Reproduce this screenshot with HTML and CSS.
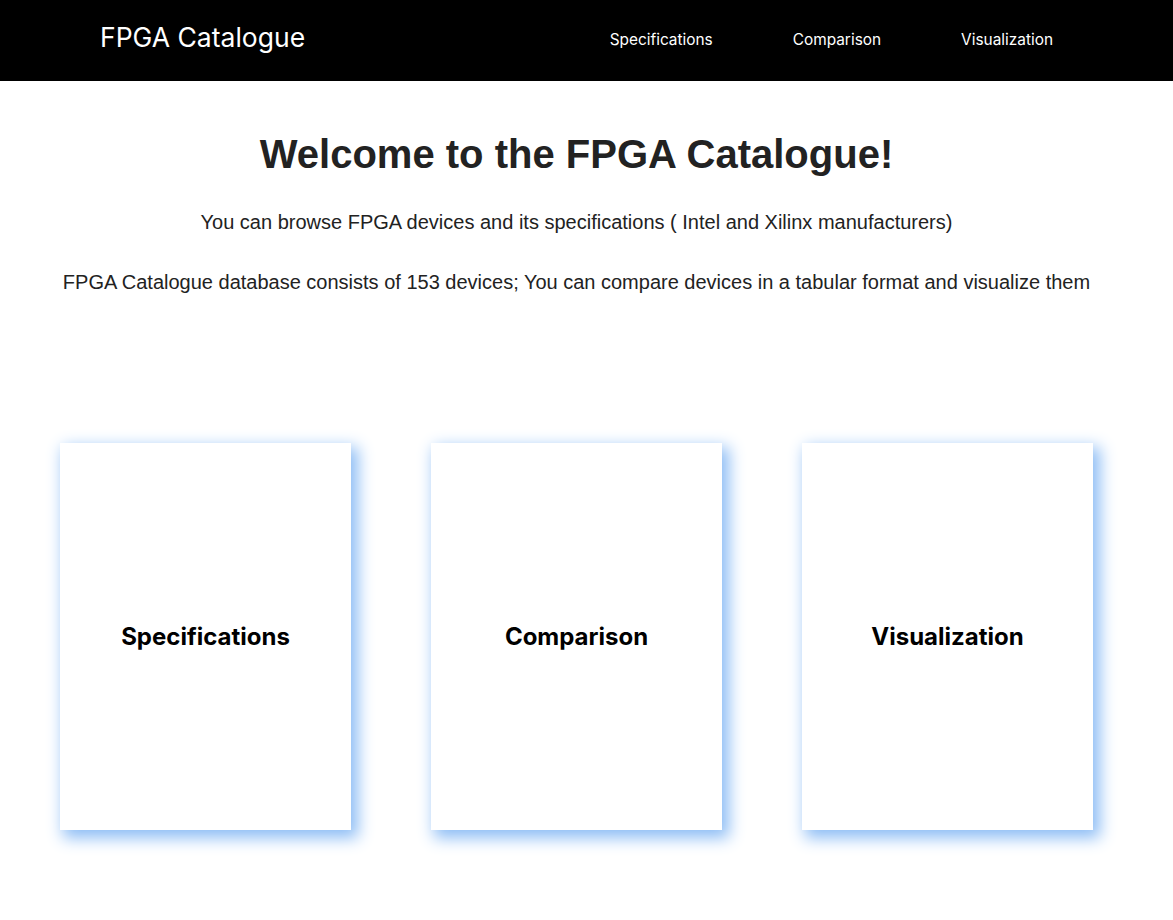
FILE: index.html
```html
<!DOCTYPE html>
<html lang="en">
<head>
  <meta charset="UTF-8">
  <meta name="viewport" content="width=device-width, initial-scale=1.0">
  <title>FPGA Catalogue</title>
  <link rel="stylesheet" href="styles.css">
</head>
<body>
  <nav class="navbar">
    <a class="brand" href="#">FPGA Catalogue</a>
    <ul class="nav-links">
      <li><a href="#">Specifications</a></li>
      <li><a href="#">Comparison</a></li>
      <li><a href="#">Visualization</a></li>
    </ul>
  </nav>

  <section class="intro">
    <h1>Welcome to the FPGA Catalogue!</h1>
    <p>You can browse FPGA devices and its specifications ( Intel and Xilinx manufacturers)</p>
    <p>FPGA Catalogue database consists of 153 devices; You can compare devices in a tabular format and visualize them</p>
  </section>

  <section class="cards">
    <a class="card" href="#">Specifications</a>
    <a class="card" href="#">Comparison</a>
    <a class="card" href="#">Visualization</a>
  </section>
</body>
</html>
```

FILE: styles.css
```css
body {
  margin: 0;
  padding: 0;
  min-height: 920px;
  font-family: "Liberation Sans", Arial, sans-serif;
  color: #222;
  background: #fff;
}
a {
  text-decoration: none;
}
.navbar {
  display: flex;
  align-items: center;
  justify-content: space-between;
  height: 81px;
  padding: 0 120px 0 100px;
  background-color: #000;
  font-family: Inter, "Noto Sans", sans-serif;
}
.brand {
  color: #fff;
  font-size: 26.5px;
  margin-top: -8px;
}
.nav-links {
  display: flex;
  gap: 80px;
  list-style: none;
  margin: 0;
  padding: 0 0 4px 0;
}
.nav-links a {
  color: #fff;
  font-size: 15.4px;
}
.intro {
  text-align: center;
  padding: 51px 20px 0 0;
}
.intro h1 {
  font-size: 40px;
  font-weight: bold;
  margin: 0 0 34px 0;
}
.intro p {
  font-size: 20px;
  margin: 0 0 37px 0;
}
.cards {
  display: flex;
  gap: 80px;
  padding: 112px 80px 60px 60px;
}
.card {
  width: 291px;
  height: 387px;
  display: flex;
  align-items: center;
  justify-content: center;
  background: #fff;
  color: #000;
  font-family: Inter, "Noto Sans", sans-serif;
  font-size: 24px;
  font-weight: bold;
  box-shadow: 5px 6px 15px 2px #8dbdf5;
}
```
